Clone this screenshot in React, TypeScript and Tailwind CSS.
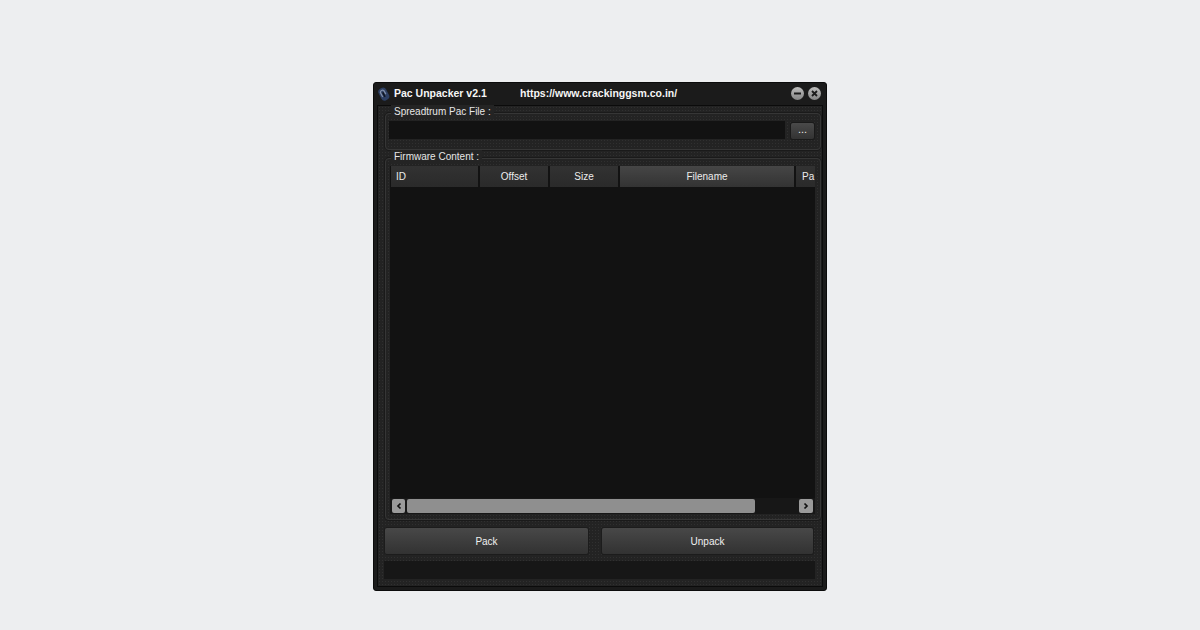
import React from 'react'

const dots = 'bg-[#232323] bg-[radial-gradient(#303030_0.7px,transparent_0.8px)] bg-[length:3px_3px]'
const font = 'font-["Liberation_Sans",sans-serif]'

const columns = [
  { label: 'ID', width: 'w-[87px]', align: 'text-left pl-[5px]', active: false },
  { label: 'Offset', width: 'w-[68px]', align: 'text-center', active: false },
  { label: 'Size', width: 'w-[68px]', align: 'text-center', active: false },
  { label: 'Filename', width: 'w-[174px]', align: 'text-center', active: true },
  { label: 'Pa', width: 'w-[19px]', align: 'text-left pl-[6px]', active: false },
]

function GroupBox({ title, className, children }: { title: string; className: string; children: React.ReactNode }) {
  return (
    <div className={`relative ml-[1px] shrink-0 rounded-[4px] border border-[#363636] shadow-[0_0_0_1px_#1a1a1a] ${className}`}>
      <span className="absolute left-[5px] top-[-9px] bg-[#242424] px-[3px] text-[10px] leading-[14px] text-[#e6e6e6]">
        {title}
      </span>
      {children}
    </div>
  )
}

function ActionButton({ label, className }: { label: string; className: string }) {
  return (
    <button className={`h-[26px] rounded-[2px] bg-gradient-to-b from-[#484848] to-[#323232] pt-[1px] text-[10px] text-[#f0f0f0] shadow-[0_0_0_1px_#1c1c1c] ${className}`}>
      {label}
    </button>
  )
}

export default function App() {
  return (
    <div className={`h-[630px] w-[1200px] overflow-hidden bg-[#edeef0] pt-[82px] ${font}`}>
      <div className="ml-[373px] flex h-[509px] w-[454px] flex-col rounded-[3px] border border-[#0b0b0b] bg-[#1b1b1b] px-[3px] pb-[3px]">
        {/* Title bar */}
        <div className="flex h-[22px] shrink-0 items-center pb-[1px] pr-[2px]">
          <svg width="12" height="14" viewBox="0 0 12 14" className="ml-[1px]">
            <g transform="rotate(-28 6 7)">
              <rect x="1.5" y="0.5" width="8.5" height="13" rx="3.6" fill="#2d3f62" />
              <path d="M3.5 9 L3.5 4 A2.2 2.2 0 0 1 7.5 4 L7.5 8" fill="none" stroke="#7f8ea8" strokeWidth="1.3" />
              <path d="M5.6 5 L5.6 10" stroke="#10151f" strokeWidth="1.5" />
            </g>
          </svg>
          <span className="ml-[4px] w-[126px] text-[10.5px] font-bold text-[#f6f6f6]">Pac Unpacker v2.1</span>
          <span className="text-[10.5px] font-bold text-[#f6f6f6]">https://www.crackinggsm.co.in/</span>
          <div className="ml-auto flex items-center gap-[4px]">
            <svg width="13" height="13" viewBox="0 0 13 13">
              <defs>
                <linearGradient id="cap" x1="0" y1="0" x2="0" y2="1">
                  <stop offset="0" stopColor="#bdbdbd" />
                  <stop offset="1" stopColor="#858585" />
                </linearGradient>
              </defs>
              <circle cx="6.5" cy="6.5" r="6.5" fill="url(#cap)" />
              <rect x="3" y="5.5" width="7" height="2" fill="#1c1c1c" />
            </svg>
            <svg width="13" height="13" viewBox="0 0 13 13">
              <circle cx="6.5" cy="6.5" r="6.5" fill="url(#cap)" />
              <path d="M4 4 L9 9 M9 4 L4 9" stroke="#1c1c1c" strokeWidth="1.8" />
            </svg>
          </div>
        </div>

        {/* Body */}
        <div className={`flex flex-1 flex-col border border-[#0b0b0b] pl-[6px] pr-[1px] pt-[7px] ${dots}`}>
          <GroupBox title="Spreadtrum Pac File :" className="h-[37px]">
            <div className="flex items-start pl-[3px] pr-[6px] pt-[7px]">
              <div className="h-[18px] flex-1 bg-[#121212]" />
              <button className="ml-[6px] mt-[2px] flex h-[16px] w-[23px] items-center justify-center rounded-[2px] bg-gradient-to-b from-[#4a4a4a] to-[#333333] pb-[3px] text-[11px] leading-none text-[#e8e8e8] shadow-[0_0_0_1px_#1a1a1a]">
                ...
              </button>
            </div>
          </GroupBox>

          <GroupBox title="Firmware Content :" className="mt-[8px] h-[362px]">
            <div className="ml-[4px] mr-[5px] mt-[7px] flex h-[348px] flex-col bg-[#121212]">
              <div className="flex h-[21px] shrink-0 gap-[2px] overflow-hidden pl-[1px]">
                {columns.map((c) => (
                  <div
                    key={c.label}
                    className={`h-full shrink-0 text-[10px] leading-[21px] text-[#ececec] ${c.width} ${c.align} ${
                      c.active ? 'bg-gradient-to-b from-[#464646] to-[#333333]' : 'bg-gradient-to-b from-[#323232] to-[#2a2a2a]'
                    }`}
                  >
                    {c.label}
                  </div>
                ))}
              </div>
              <div className="flex-1" />
              <div className="flex h-[16px] shrink-0 items-center bg-[#171717] pl-[2px] pr-[2px]">
                <button className="flex h-[14px] w-[13px] items-center justify-center rounded-[2px] bg-[#9b9b9b]">
                  <svg width="6" height="8" viewBox="0 0 6 8">
                    <path d="M4.5 1.5 L2 4 L4.5 6.5" fill="none" stroke="#111111" strokeWidth="1.7" />
                  </svg>
                </button>
                <div className="ml-[2px] h-[14px] w-[348px] rounded-[2px] bg-[#8f8f8f]" />
                <button className="ml-auto flex h-[14px] w-[14px] items-center justify-center rounded-[2px] bg-[#9b9b9b]">
                  <svg width="6" height="8" viewBox="0 0 6 8">
                    <path d="M1.5 1.5 L4 4 L1.5 6.5" fill="none" stroke="#111111" strokeWidth="1.7" />
                  </svg>
                </button>
              </div>
            </div>
          </GroupBox>

          <div className="ml-[1px] mt-[8px] flex shrink-0 gap-[14px]">
            <ActionButton label="Pack" className="w-[203px]" />
            <ActionButton label="Unpack" className="w-[211px]" />
          </div>

          <div className="mt-[7px] h-[18px] w-[431px] shrink-0 bg-[#171717]" />
        </div>
      </div>
    </div>
  )
}
